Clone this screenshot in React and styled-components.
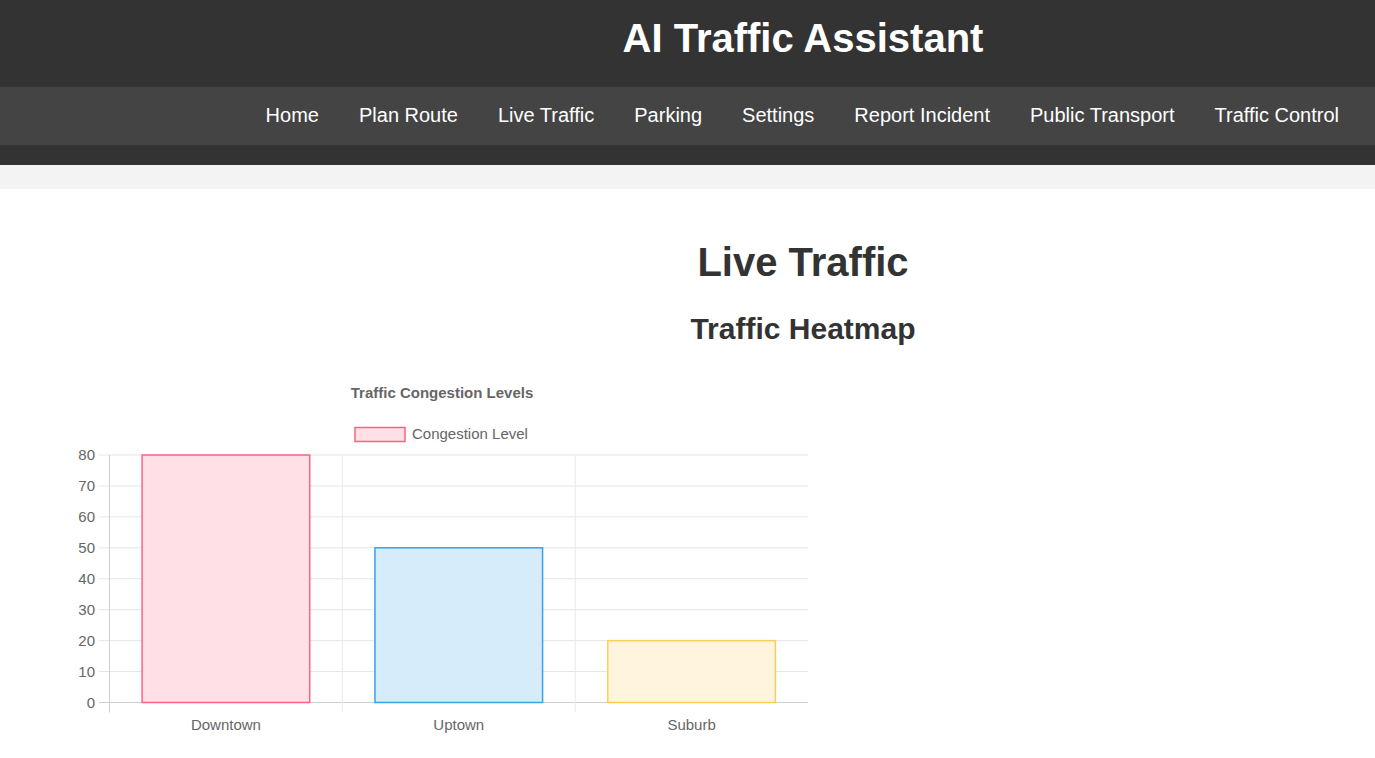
import React from 'react';
import styled, { createGlobalStyle } from 'styled-components';

const GlobalStyle = createGlobalStyle`
    body {
        margin: 0;
        background: #f3f3f3;
        font-family: "Liberation Sans", Arial, sans-serif;
    }
`;

const Header = styled.header`
    background: #333;
    padding: 15px 0 20px;
`;

const Title = styled.h1`
    margin: 0 0 26px;
    padding-left: 231px;
    text-align: center;
    color: #fff;
    font-size: 40px;
    line-height: 46px;
    font-weight: bold;
`;

const Nav = styled.nav`
    box-sizing: border-box;
    height: 58px;
    background: #444;
    display: flex;
    justify-content: flex-end;
    align-items: center;
    padding: 0 16px 2px 0;
`;

const NavLink = styled.a`
    padding: 0 20px;
    color: #fff;
    font-size: 20px;
    line-height: 23px;
    text-decoration: none;
`;

const Main = styled.main`
    margin-top: 24px;
    background: #fff;
    padding-top: 50px;
    min-height: 520px;
`;

const PageTitle = styled.h2`
    margin: 0;
    padding-left: 231px;
    text-align: center;
    color: #333;
    font-size: 40px;
    line-height: 46px;
`;

const SectionTitle = styled.h3`
    margin: 27px 0 0;
    padding-left: 231px;
    text-align: center;
    color: #333;
    font-size: 30px;
    line-height: 34px;
`;

const ChartBox = styled.svg`
    display: block;
    margin: 24px 0 0 60px;
    font-family: "Liberation Sans", Arial, sans-serif;
`;

const Label = styled.text`
    fill: #666;
    font-size: 15px;
`;

const links = ['Home', 'Plan Route', 'Live Traffic', 'Parking', 'Settings', 'Report Incident', 'Public Transport', 'Traffic Control'];

const bars = [
    { label: 'Downtown', value: 80, fill: '#ffe0e6', stroke: '#ff6384' },
    { label: 'Uptown', value: 50, fill: '#d7ecfb', stroke: '#36a2eb' },
    { label: 'Suburb', value: 20, fill: '#fff5dd', stroke: '#ffce56' },
];

const left = 109.5;
const right = 808;
const top = 455;
const bottom = 702.5;
const catW = (right - left) / 3;
const barW = catW * 0.8 * 0.9;
const yFor = (v) => bottom - (bottom - top) * v / 80;

const Chart = () => (
    <ChartBox width="760" height="380" viewBox="60 370 760 380">
        <Label x="442" y="398" textAnchor="middle" fontWeight="bold">Traffic Congestion Levels</Label>
        <rect x="355" y="427.5" width="50" height="14" fill="#ffe0e6" stroke="#ff6384" strokeWidth="1.5" />
        <Label x="412" y="439">Congestion Level</Label>

        {[0, 10, 20, 30, 40, 50, 60, 70, 80].map((v) => (
            <g key={v}>
                <line x1="99" x2={right} y1={yFor(v)} y2={yFor(v)} stroke={v === 0 ? '#cfcfcf' : '#e5e5e5'} strokeWidth="1" />
                <Label x="95" y={yFor(v) + 5.4} textAnchor="end">{v}</Label>
            </g>
        ))}

        {[0, 1, 2].map((i) => (
            <line key={i} x1={left + catW * i} x2={left + catW * i} y1={top} y2="712.5" stroke={i === 0 ? '#cfcfcf' : '#e8e8e8'} strokeWidth="1" />
        ))}

        {bars.map((b, i) => {
            const x = left + catW * i + (catW - barW) / 2;
            return (
                <g key={b.label}>
                    <rect x={x} y={yFor(b.value)} width={barW} height={bottom - yFor(b.value)} fill={b.fill} stroke={b.stroke} strokeWidth="1.5" />
                    <Label x={left + catW * (i + 0.5)} y="730" textAnchor="middle">{b.label}</Label>
                </g>
            );
        })}
    </ChartBox>
);

const App = () => {
    return (
        <>
            <GlobalStyle />
            <Header>
                <Title>AI Traffic Assistant</Title>
                <Nav>
                    {links.map((l) => <NavLink key={l} href="#">{l}</NavLink>)}
                </Nav>
            </Header>
            <Main>
                <PageTitle>Live Traffic</PageTitle>
                <SectionTitle>Traffic Heatmap</SectionTitle>
                <Chart />
            </Main>
        </>
    );
};

export default App;
